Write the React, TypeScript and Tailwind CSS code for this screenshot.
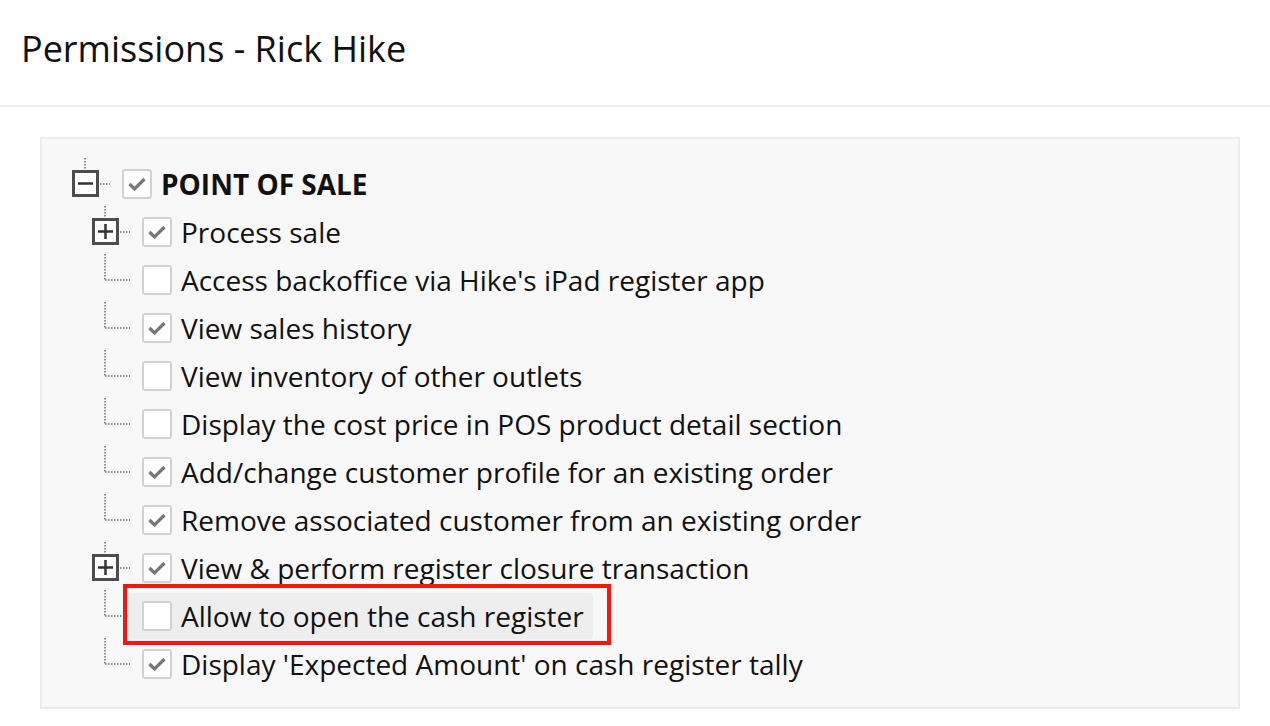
import React from "react";

type Item = { label: string; checked: boolean; kind: "plus" | "leaf"; highlight?: boolean };

const items: Item[] = [
  { label: "Process sale", checked: true, kind: "plus" },
  { label: "Access backoffice via Hike's iPad register app", checked: false, kind: "leaf" },
  { label: "View sales history", checked: true, kind: "leaf" },
  { label: "View inventory of other outlets", checked: false, kind: "leaf" },
  { label: "Display the cost price in POS product detail section", checked: false, kind: "leaf" },
  { label: "Add/change customer profile for an existing order", checked: true, kind: "leaf" },
  { label: "Remove associated customer from an existing order", checked: true, kind: "leaf" },
  { label: "View & perform register closure transaction", checked: true, kind: "plus" },
  { label: "Allow to open the cash register", checked: false, kind: "leaf", highlight: true },
  { label: "Display 'Expected Amount' on cash register tally", checked: true, kind: "leaf" },
];

const DOT = "#8f8f8f";

function Toggle({ kind, width }: { kind: "plus" | "minus" | "leaf"; width: number }) {
  if (kind === "leaf") {
    return (
      <svg width={width} height={48} className="shrink-0 overflow-visible">
        <line x1={13} y1={-2} x2={13} y2={25} stroke={DOT} strokeWidth={2} strokeDasharray="1.5 1.5" />
        <line x1={13} y1={24} x2={38} y2={24} stroke={DOT} strokeWidth={2} strokeDasharray="1.5 1.5" />
      </svg>
    );
  }
  return (
    <svg width={width} height={48} className="shrink-0 overflow-visible">
      <line x1={13} y1={-2} x2={13} y2={11} stroke={DOT} strokeWidth={2} strokeDasharray="1.5 1.5" />
      <rect x={1.5} y={11.5} width={24} height={24} fill="#fff" stroke="#4d4d4d" strokeWidth={3} />
      <line x1={6} y1={23.5} x2={21} y2={23.5} stroke="#333" strokeWidth={2.5} />
      {kind === "plus" && <line x1={13.5} y1={16} x2={13.5} y2={31} stroke="#333" strokeWidth={2.5} />}
      <line x1={28} y1={24} x2={38} y2={24} stroke={DOT} strokeWidth={2} strokeDasharray="1.5 1.5" />
    </svg>
  );
}

function Check({ checked }: { checked: boolean }) {
  return (
    <div className="flex h-[30px] w-[30px] shrink-0 items-center justify-center rounded-[3px] border-2 border-[#d2d2d2] bg-white">
      {checked && (
        <svg width="20" height="16" viewBox="0 0 20 16">
          <path d="M2.5 8 L7.5 13 L17.5 3" fill="none" stroke="#777" strokeWidth={3.2} strokeLinejoin="miter" />
        </svg>
      )}
    </div>
  );
}

export default function App() {
  return (
    <div className="min-h-[726px] w-full bg-white font-['Open_Sans',sans-serif] text-[#111]">
      <div className="flex h-[107px] items-start border-b-2 border-[#ececec] pl-[21px] pt-[24px]">
        <h1 className="text-[36px] font-normal leading-[50px]">Permissions - Rick Hike</h1>
      </div>
      <div className="pl-[40px] pr-[30px] pt-[30px]">
        <div className="h-[572px] border-2 border-[#ececec] bg-[#f8f8f8] pt-[21px]">
          <div className="flex h-12 items-center pl-[30px]">
            <Toggle kind="minus" width={50} />
            <Check checked />
            <span className="ml-[9px] text-[28px] font-bold leading-none">POINT OF SALE</span>
          </div>
          {items.map((it) =>
            it.highlight ? (
              <div key={it.label} className="flex h-12 items-center pl-[50px]">
                <Toggle kind="leaf" width={37} />
                <div className="relative flex h-[46px] items-center rounded-[4px] bg-[#eeeeee] pl-[13px] pr-[9px]">
                  <Check checked={it.checked} />
                  <span className="ml-[9px] text-[28px] leading-none">{it.label}</span>
                  <div className="pointer-events-none absolute -bottom-[6px] -left-[6px] -right-[18px] -top-[9px] border-[4px] border-[#f5160e]" />
                </div>
              </div>
            ) : (
              <div key={it.label} className="flex h-12 items-center pl-[50px]">
                <Toggle kind={it.kind} width={50} />
                <Check checked={it.checked} />
                <span className="ml-[9px] text-[28px] leading-none">{it.label}</span>
              </div>
            )
          )}
        </div>
      </div>
    </div>
  );
}
